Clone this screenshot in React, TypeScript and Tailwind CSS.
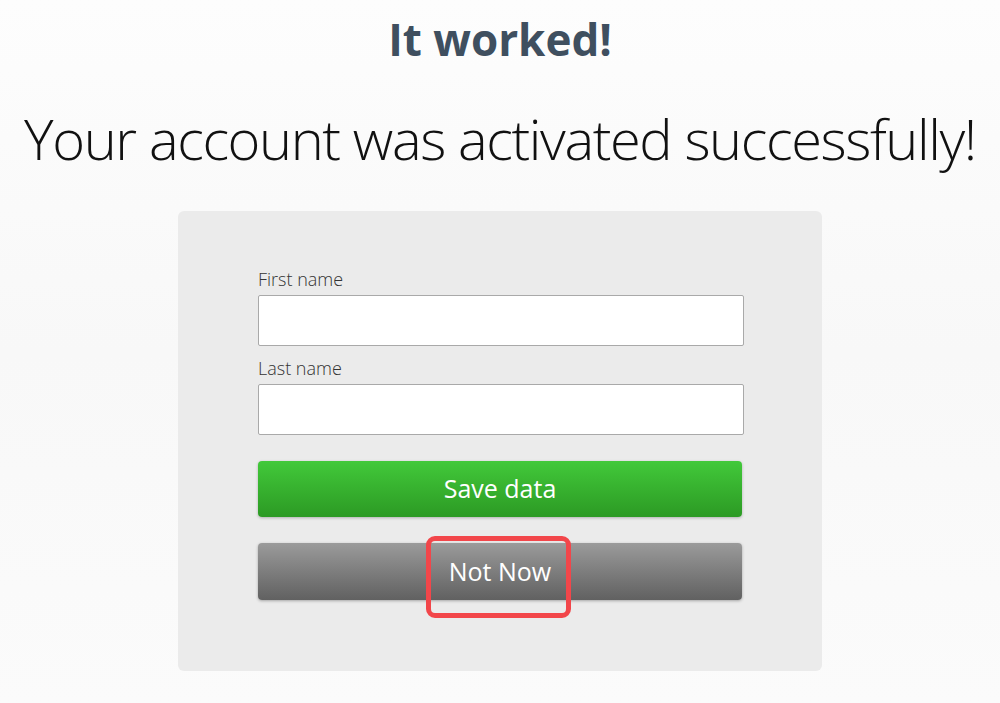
import React from 'react';

const font = "font-['Open_Sans',sans-serif]";

function Field({ label }: { label: string }) {
    return (
        <div className="flex flex-col">
            <label className="text-[18px] leading-[24px] font-light text-[#333] mb-[4px]">{label}</label>
            <input
                type="text"
                className="h-[51px] w-[486px] bg-white border border-[#a9a9a9] rounded-[2px] outline-none px-3"
            />
        </div>
    );
}

export default function App() {
    return (
        <div className={`${font} min-h-[703px] w-full bg-gradient-to-b from-[#fdfdfd] via-[#f8f8f8] to-[#fbfbfb] flex flex-col items-center`}>
            <h1 className="mt-[11px] text-[44px] leading-[56px] font-bold text-[#3f4f5f]">It worked!</h1>
            <h2 className="mt-[31px] text-[56px] leading-[80px] font-light text-[#111] tracking-[-1.4px] whitespace-nowrap">
                Your account was activated successfully!
            </h2>

            <div className="mt-[33px] w-[644px] h-[460px] bg-[#ebebeb] rounded-[6px] px-[80px] pt-[56px]">
                <div className="flex flex-col gap-[10px]">
                    <Field label="First name" />
                    <Field label="Last name" />
                </div>

                <div className="mt-[26px] flex flex-col gap-[26px]">
                    <button className="h-[56px] w-full rounded-[4px] bg-gradient-to-b from-[#42c93a] to-[#2c9a24] text-white text-[25px] shadow-[0_1px_3px_rgba(0,0,0,0.25)]">
                        Save data
                    </button>
                    <div className="relative">
                        <button className="h-[57px] w-full rounded-[4px] bg-gradient-to-b from-[#9b9b9b] to-[#616161] text-white text-[25px] shadow-[0_1px_3px_rgba(0,0,0,0.3)]">
                            Not Now
                        </button>
                        <div className="absolute left-[168px] top-[-7px] w-[145px] h-[82px] border-[5px] border-[#f2464a] rounded-[9px] pointer-events-none" />
                    </div>
                </div>
            </div>
        </div>
    );
}
